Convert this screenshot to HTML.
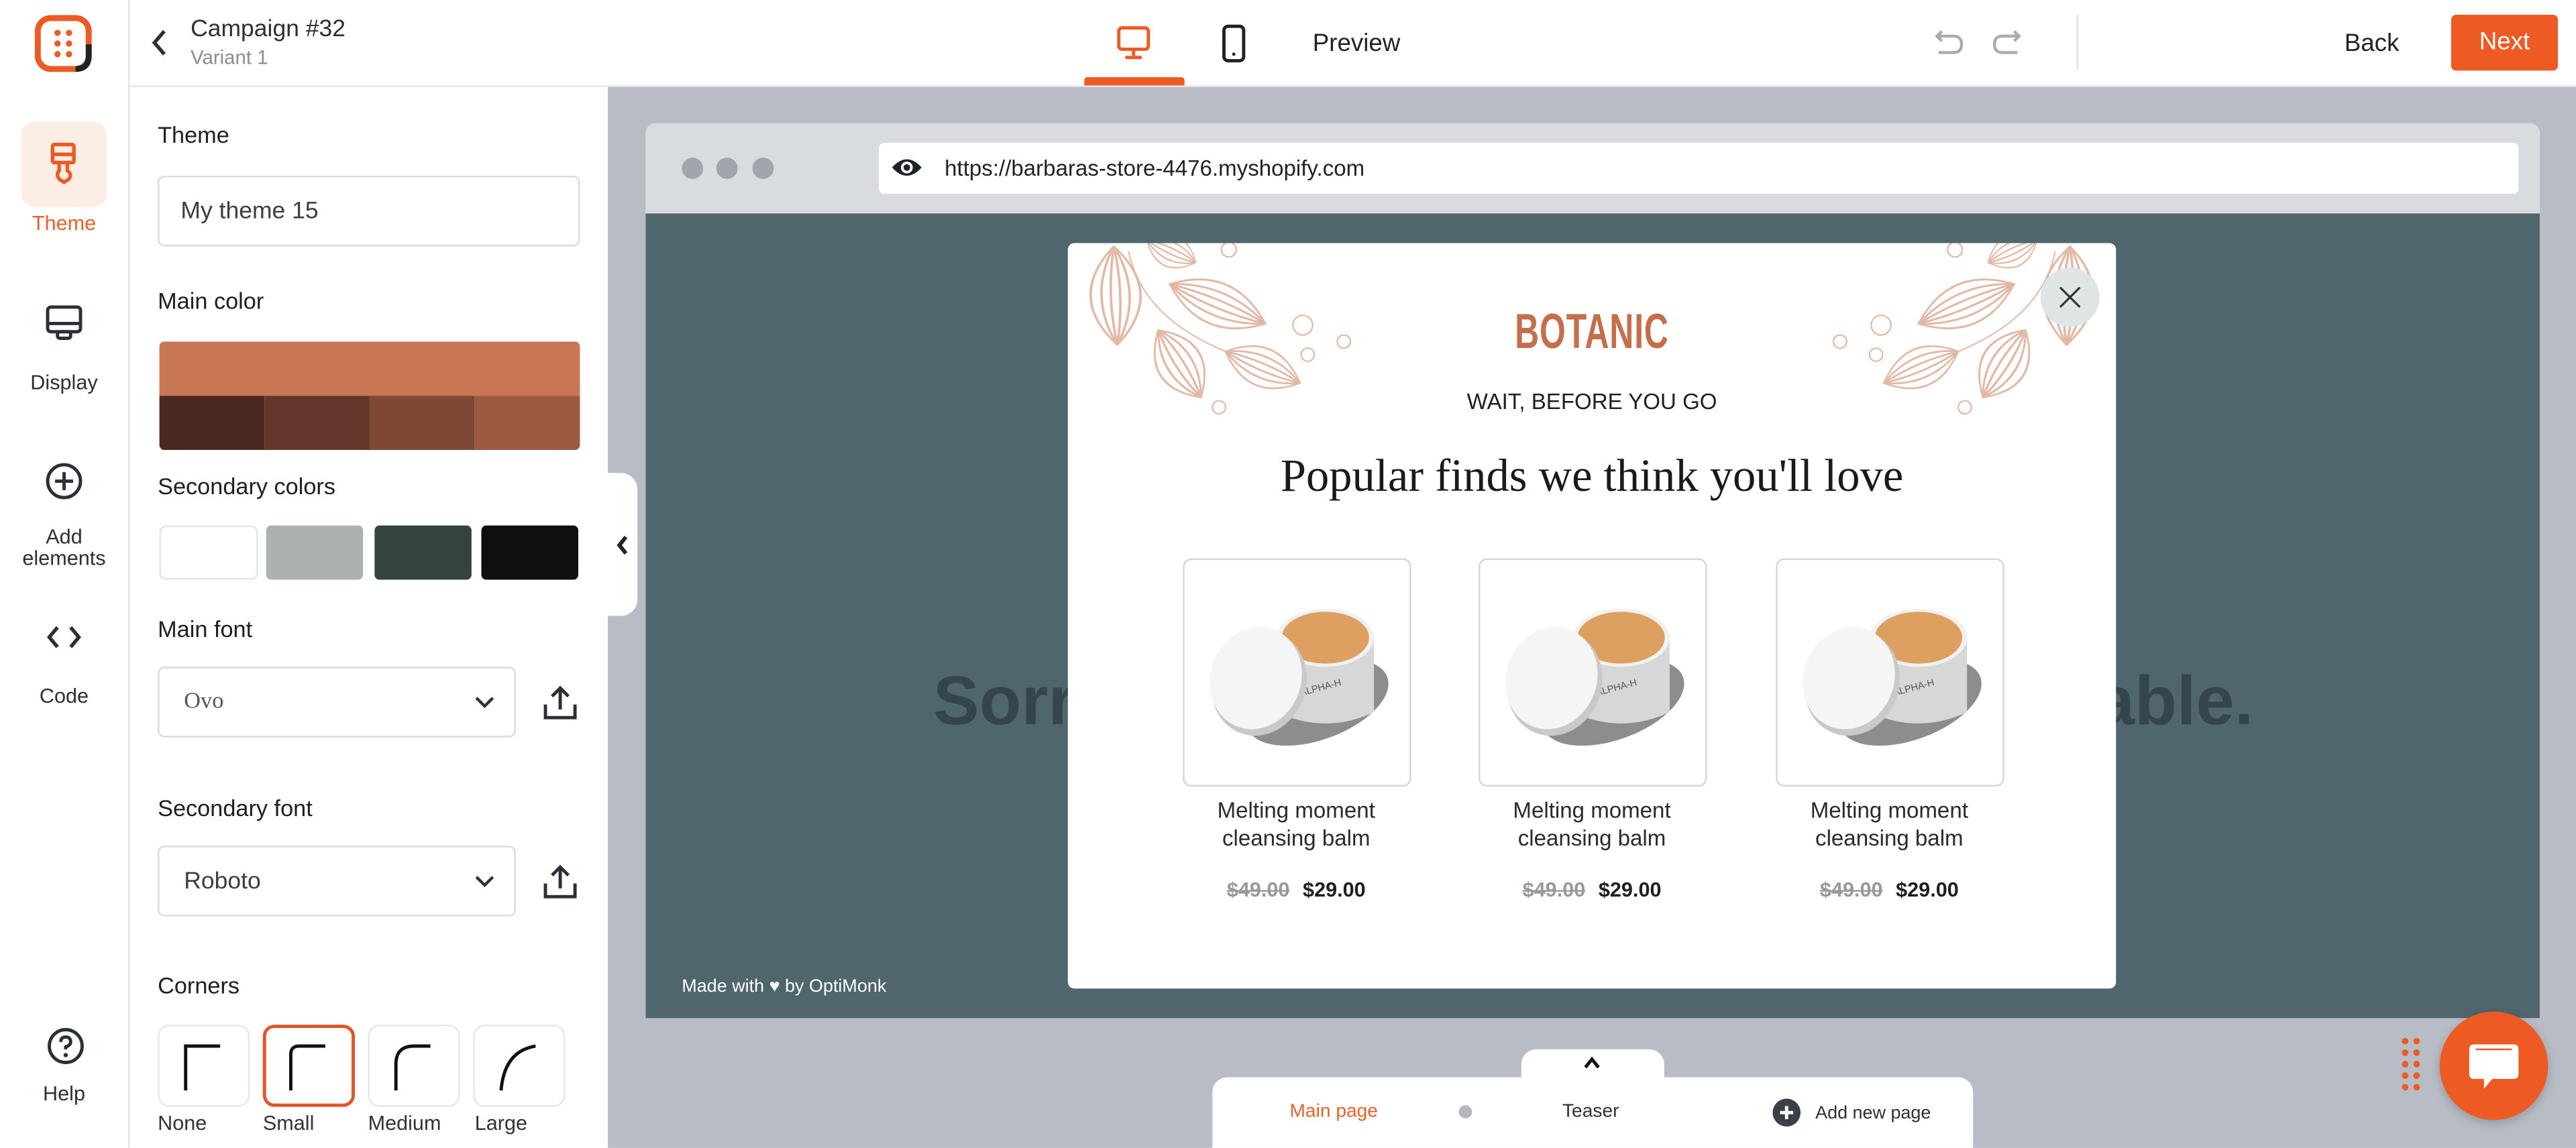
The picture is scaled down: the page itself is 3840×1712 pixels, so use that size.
<!DOCTYPE html>
<html><head><meta charset="utf-8">
<style>
html,body{margin:0;padding:0;width:3840px;height:1711px;overflow:hidden;background:#fff;}
#w{position:absolute;left:0;top:0;width:1568px;height:699px;transform:scale(2.44898);transform-origin:0 0;font-family:"Liberation Sans",sans-serif;color:#23262b;}
.a{position:absolute;}
.t{position:absolute;white-space:nowrap;}
.lbl{font-size:14px;font-weight:500;color:#1d1f23;}
.rail{font-size:12.5px;color:#2b2f36;text-align:center;width:78px;left:0;}
.box{position:absolute;border:1px solid #d9dbdf;border-radius:4px;background:#fff;box-sizing:border-box;}
.card{position:absolute;top:340px;width:139px;height:139px;border:1px solid #d6d6d6;border-radius:5px;box-sizing:border-box;background:#fff;}
.pname{position:absolute;top:486px;width:160px;text-align:center;font-size:13.5px;line-height:16.5px;color:#2a2a2a;}
.price{position:absolute;top:535px;width:160px;text-align:center;font-size:12.5px;font-weight:bold;color:#1f1f1f;}
.price s{color:#9a9a9a;margin-right:8px;}
</style></head><body><div id="w">

<div class="a" style="left:0;top:0;width:1568px;height:52px;background:#fff;border-bottom:1px solid #e3e5e8;"></div>
<div class="a" style="left:0;top:0;width:78px;height:699px;background:#fff;border-right:1px solid #e2e4e7;"></div>
<svg class="a" style="left:21px;top:9px" width="36" height="36" viewBox="0 0 36 36">
<rect x="2" y="2" width="31" height="31" rx="8" fill="none" stroke="#ee5a24" stroke-width="3.6"/>
<path d="M25 33 Q33 33 33 25 L33 18" fill="none" stroke="#222" stroke-width="3.6"/>
<g fill="#ee5a24"><circle cx="14" cy="11" r="1.9"/><circle cx="21" cy="11" r="1.9"/><circle cx="14" cy="17.5" r="1.9"/><circle cx="21" cy="17.5" r="1.9"/><circle cx="14" cy="24" r="1.9"/><circle cx="21" cy="24" r="1.9"/></g></svg>
<div class="a" style="left:13px;top:74px;width:52px;height:52px;border-radius:8px;background:#fdeee5;"></div>
<svg class="a" style="left:28px;top:86px" width="22" height="28" viewBox="0 0 22 28"><g fill="none" stroke="#ee5a24" stroke-width="2.2" stroke-linejoin="round"><rect x="4" y="2" width="13" height="11" rx="1"/><line x1="4" y1="8" x2="17" y2="8"/><path d="M8 13 L8 18 Q6 20 8 23 L11 25 L14 23 Q16 20 13 18 L13 13"/></g></svg>
<div class="t rail" style="top:129px;color:#e8622c;font-weight:500;">Theme</div>
<svg class="a" style="left:27px;top:185px" width="24" height="24" viewBox="0 0 24 24"><g fill="none" stroke="#2b2f36" stroke-width="2"><rect x="2" y="2" width="20" height="15" rx="2"/><line x1="2" y1="12" x2="22" y2="12"/><rect x="8" y="17" width="8" height="4" rx="1.5"/></g></svg>
<div class="t rail" style="top:226px;">Display</div>
<svg class="a" style="left:27px;top:281px" width="24" height="24" viewBox="0 0 24 24"><g fill="none" stroke="#2b2f36" stroke-width="2"><circle cx="12" cy="12" r="10"/><line x1="12" y1="6.5" x2="12" y2="17.5"/><line x1="6.5" y1="12" x2="17.5" y2="12"/></g></svg>
<div class="t rail" style="top:321px;line-height:13px;white-space:normal;">Add<br>elements</div>
<svg class="a" style="left:28px;top:380px" width="22" height="16" viewBox="0 0 22 16"><g fill="none" stroke="#2b2f36" stroke-width="2.2"><path d="M7 2 L2 8 L7 14"/><path d="M15 2 L20 8 L15 14"/></g></svg>
<div class="t rail" style="top:417px;">Code</div>
<svg class="a" style="left:28px;top:625px" width="24" height="24" viewBox="0 0 24 24"><g fill="none" stroke="#2b2f36" stroke-width="2"><circle cx="12" cy="12" r="10"/><path d="M9 9.5 Q9 6.5 12 6.5 Q15 6.5 15 9.5 Q15 11.5 12 12.5 L12 14"/></g><circle cx="12" cy="17.5" r="1.3" fill="#2b2f36"/></svg>
<div class="t rail" style="top:659px;">Help</div>

<svg class="a" style="left:91px;top:17px" width="12" height="18" viewBox="0 0 12 18"><path d="M9 2 L3 9 L9 16" fill="none" stroke="#2b2f36" stroke-width="2.2"/></svg>
<div class="t" style="left:116px;top:10px;font-size:14.5px;color:#2b2f36;font-weight:500;">Campaign #32</div>
<div class="t" style="left:116px;top:28px;font-size:12px;color:#8a8e95;">Variant 1</div>

<svg class="a" style="left:679px;top:15px" width="22" height="22" viewBox="0 0 22 22"><g fill="none" stroke="#ee5a24" stroke-width="2"><rect x="2" y="2" width="18" height="13" rx="2"/><line x1="11" y1="15" x2="11" y2="19"/><line x1="6" y1="20" x2="16" y2="20"/></g></svg>
<div class="a" style="left:660px;top:47px;width:61px;height:5px;background:#ee5a24;border-radius:2px 2px 0 0;"></div>
<svg class="a" style="left:743px;top:14px" width="16" height="26" viewBox="0 0 16 26"><rect x="2" y="2" width="12" height="21" rx="2.5" fill="none" stroke="#1f2227" stroke-width="2"/><circle cx="8" cy="19" r="1" fill="#1f2227"/></svg>
<div class="t" style="left:799px;top:18px;font-size:15px;color:#1f2227;font-weight:500;">Preview</div>
<svg class="a" style="left:1176px;top:16px" width="56" height="20" viewBox="0 0 56 20"><g fill="none" stroke="#a9adb3" stroke-width="1.8"><path d="M6 3 L3 6 L6 9"/><path d="M3 6 L13 6 Q18 6 18 11 Q18 16 13 16 L4 16"/><path d="M50 3 L53 6 L50 9"/><path d="M53 6 L43 6 Q38 6 38 11 Q38 16 43 16 L52 16"/></g></svg>
<div class="a" style="left:1264px;top:9px;width:1px;height:34px;background:#dfe1e4;"></div>
<div class="t" style="left:1427px;top:18px;font-size:15px;color:#1f2227;font-weight:500;">Back</div>
<div class="a" style="left:1492px;top:9px;width:65px;height:34px;background:#ee5a24;border-radius:3px;color:#fff;font-size:15px;font-weight:500;text-align:center;line-height:34px;">Next</div>

<div class="a" style="left:370px;top:53px;width:1198px;height:646px;background:#b8bdc5;"></div>

<div class="t lbl" style="left:96px;top:74px;">Theme</div>
<div class="box" style="left:96px;top:107px;width:257px;height:43px;"></div>
<div class="t" style="left:110px;top:121px;font-size:14.5px;color:#3a3d42;">My theme 15</div>
<div class="t lbl" style="left:96px;top:175px;">Main color</div>
<div class="a" style="left:97px;top:208px;width:256px;height:66px;border-radius:3px;overflow:hidden;">
<div class="a" style="left:0;top:0;width:256px;height:33px;background:#c87654;"></div>
<div class="a" style="left:0;top:33px;width:64px;height:33px;background:#4a2920;"></div>
<div class="a" style="left:64px;top:33px;width:64px;height:33px;background:#64372a;"></div>
<div class="a" style="left:128px;top:33px;width:64px;height:33px;background:#7f4834;"></div>
<div class="a" style="left:192px;top:33px;width:64px;height:33px;background:#9b5a3f;"></div>
</div>
<div class="t lbl" style="left:96px;top:288px;">Secondary colors</div>
<div class="box" style="left:97px;top:320px;width:60px;height:33px;border-color:#e4e5e7;"></div>
<div class="a" style="left:162px;top:320px;width:59px;height:33px;border-radius:3px;background:#adb1af;"></div>
<div class="a" style="left:228px;top:320px;width:59px;height:33px;border-radius:3px;background:#33443f;"></div>
<div class="a" style="left:293px;top:320px;width:59px;height:33px;border-radius:3px;background:#0d100f;"></div>
<div class="a" style="left:362px;top:288px;width:26px;height:87px;background:#fff;border-radius:0 10px 10px 0;"></div>
<svg class="a" style="left:374px;top:325px" width="10" height="14" viewBox="0 0 10 14"><path d="M7 2 L3 7 L7 12" fill="none" stroke="#1f2227" stroke-width="2.4"/></svg>

<div class="t lbl" style="left:96px;top:375px;">Main font</div>
<div class="box" style="left:96px;top:406px;width:218px;height:43px;"></div>
<div class="t" style="left:112px;top:420px;font-size:14px;color:#555;font-family:'Liberation Serif',serif;">Ovo</div>
<svg class="a" style="left:288px;top:423px" width="14" height="9" viewBox="0 0 14 9"><path d="M2 2 L7 7 L12 2" fill="none" stroke="#333" stroke-width="1.8"/></svg>
<svg class="a" style="left:329px;top:416px" width="24" height="24" viewBox="0 0 24 24"><g fill="none" stroke="#2b2f36" stroke-width="2"><path d="M3 13 L3 21 L21 21 L21 13"/><path d="M12 16 L12 3"/><path d="M7 8 L12 3 L17 8"/></g></svg>
<div class="t lbl" style="left:96px;top:484px;">Secondary font</div>
<div class="box" style="left:96px;top:515px;width:218px;height:43px;"></div>
<div class="t" style="left:112px;top:529px;font-size:14.5px;color:#3a3d42;">Roboto</div>
<svg class="a" style="left:288px;top:532px" width="14" height="9" viewBox="0 0 14 9"><path d="M2 2 L7 7 L12 2" fill="none" stroke="#333" stroke-width="1.8"/></svg>
<svg class="a" style="left:329px;top:525px" width="24" height="24" viewBox="0 0 24 24"><g fill="none" stroke="#2b2f36" stroke-width="2"><path d="M3 13 L3 21 L21 21 L21 13"/><path d="M12 16 L12 3"/><path d="M7 8 L12 3 L17 8"/></g></svg>
<div class="t lbl" style="left:96px;top:592px;">Corners</div>
<div class="box" style="left:96px;top:624px;width:56px;height:50px;border-color:#e6e7e9;border-radius:7px;"></div>
<div class="box" style="left:160px;top:624px;width:56px;height:50px;border:2px solid #e0552a;border-radius:7px;"></div>
<div class="box" style="left:224px;top:624px;width:56px;height:50px;border-color:#e6e7e9;border-radius:7px;"></div>
<div class="box" style="left:288px;top:624px;width:56px;height:50px;border-color:#e6e7e9;border-radius:7px;"></div>
<svg class="a" style="left:96px;top:624px" width="250" height="50" viewBox="0 0 250 50"><g fill="none" stroke="#111" stroke-width="2"><path d="M17 40 L17 13 L38 13"/><path d="M81 40 L81 18 Q81 13 86 13 L102 13"/><path d="M145 40 L145 24 Q145 13 156 13 L166 13"/><path d="M209 40 Q211 16 230 13"/></g></svg>
<div class="t" style="left:96px;top:677px;font-size:12.5px;color:#333;">None</div>
<div class="t" style="left:160px;top:677px;font-size:12.5px;color:#333;">Small</div>
<div class="t" style="left:224px;top:677px;font-size:12.5px;color:#333;">Medium</div>
<div class="t" style="left:289px;top:677px;font-size:12.5px;color:#333;">Large</div>

<div class="a" style="left:393px;top:75px;width:1153px;height:545px;background:#d8dbe0;border-radius:6px 6px 0 0;overflow:hidden;">
<div class="a" style="left:0;top:55px;width:1153px;height:490px;background:#4f666c;"></div>
</div>
<div class="a" style="left:415px;top:96px;width:13px;height:13px;border-radius:50%;background:#a2a6ac;"></div>
<div class="a" style="left:436px;top:96px;width:13px;height:13px;border-radius:50%;background:#a2a6ac;"></div>
<div class="a" style="left:458px;top:96px;width:13px;height:13px;border-radius:50%;background:#a2a6ac;"></div>
<div class="a" style="left:535px;top:87px;width:998px;height:31px;background:#fff;border-radius:3px;"></div>
<svg class="a" style="left:542px;top:94px" width="20" height="16" viewBox="0 0 20 16"><path d="M1 8 Q10 -2 19 8 Q10 18 1 8Z" fill="#1f2227"/><circle cx="10" cy="8" r="3.6" fill="#fff"/><circle cx="10" cy="8" r="2" fill="#1f2227"/></svg>
<div class="t" style="left:575px;top:95px;font-size:13.5px;color:#1f2227;">https://barbaras-store-4476.myshopify.com</div>
<div class="t" style="left:568px;top:403px;font-size:42px;font-weight:bold;color:#34464b;">Sorr</div>
<div class="t" style="left:1276px;top:403px;font-size:42px;font-weight:bold;color:#34464b;">able.</div>
<div class="t" style="left:415px;top:595px;font-size:11px;color:#fff;">Made with ♥ by OptiMonk</div>

<div class="a" style="left:650px;top:148px;width:638px;height:454px;background:#fff;border-radius:4px;overflow:hidden;">
<svg class="a" style="left:0;top:0" width="638" height="140" viewBox="0 0 638 140">
<defs><g id="lf" fill="none" stroke="#e2b9a6" stroke-width="0.8"><path d="M0 0 Q30 -16 60 0 Q30 16 0 0Z"/><path d="M0 0 Q30 -9 60 0"/><path d="M0 0 Q30 -3 60 0"/><path d="M0 0 Q30 3 60 0"/><path d="M0 0 Q30 9 60 0"/></g></defs>
<g id="deco">
<use href="#lf" transform="translate(28,2) rotate(88) scale(1,1.9)"/>
<use href="#lf" transform="translate(62,25) rotate(22.5) scale(1.05,1.6)"/>
<use href="#lf" transform="translate(55,53) rotate(57.6) scale(0.81,1.7)"/>
<use href="#lf" transform="translate(96,66) rotate(23) scale(0.82,1.45)"/>
<use href="#lf" transform="translate(48,-2) rotate(25) scale(0.55,1.2)"/>
<path d="M37 5 Q45 45 96 66" fill="none" stroke="#e2b9a6" stroke-width="0.8"/>
<g fill="none" stroke="#e2b9a6" stroke-width="0.9"><circle cx="98" cy="4" r="4.5"/><circle cx="143" cy="50" r="6"/><circle cx="168" cy="60" r="4"/><circle cx="146" cy="68" r="4"/><circle cx="92" cy="100" r="4"/></g>
</g>
<use href="#deco" transform="translate(638,0) scale(-1,1)"/>
</svg>
<div class="a" style="left:592px;top:15px;width:36px;height:36px;border-radius:50%;background:#dfe5e4;"></div>
<svg class="a" style="left:602px;top:25px" width="16" height="16" viewBox="0 0 16 16"><path d="M2 2 L14 14 M14 2 L2 14" stroke="#333" stroke-width="1.3"/></svg>
<div class="t" style="left:0;width:638px;top:38px;text-align:center;"><span style="display:inline-block;font-size:30px;font-weight:bold;color:#c46e4c;transform:scaleX(0.68);letter-spacing:0.5px;">BOTANIC</span></div>
<div class="t" style="left:0;width:638px;top:89px;text-align:center;font-size:13.5px;color:#1f1f1f;">WAIT, BEFORE YOU GO</div>
<div class="t" style="left:0;width:638px;top:127px;text-align:center;font-size:28px;color:#1a1a1a;font-family:'Liberation Serif',serif;">Popular finds we think you'll love</div>
</div>
<svg width="0" height="0" style="position:absolute"><defs><g id="jar">
<ellipse cx="82" cy="88" rx="46" ry="23" transform="rotate(-20 82 88)" fill="#8d8d8d"/>
<path d="M57 48 L57 94 Q87 108 117 94 L117 48Z" fill="#d7d7d7"/>
<ellipse cx="87" cy="48" rx="30" ry="18" fill="#f1f1f1"/>
<ellipse cx="87" cy="48" rx="27" ry="16" fill="#dea060"/>
<text x="72" y="84" font-size="6" fill="#555" font-family="Liberation Sans,sans-serif" transform="rotate(-15 72 84)">ALPHA-H</text>
<ellipse cx="46" cy="76" rx="29" ry="33" transform="rotate(20 46 76)" fill="#c9c9c9"/>
<ellipse cx="44" cy="73" rx="28" ry="32" transform="rotate(20 44 73)" fill="#f5f5f5"/>
</g></defs></svg>
<div class="card" style="left:720px;"><svg width="137" height="137" viewBox="0 0 139 139"><use href="#jar"/></svg></div>
<div class="card" style="left:900px;"><svg width="137" height="137" viewBox="0 0 139 139"><use href="#jar"/></svg></div>
<div class="card" style="left:1081px;"><svg width="137" height="137" viewBox="0 0 139 139"><use href="#jar"/></svg></div>
<div class="pname" style="left:709px;">Melting moment<br>cleansing balm</div>
<div class="pname" style="left:889px;">Melting moment<br>cleansing balm</div>
<div class="pname" style="left:1070px;">Melting moment<br>cleansing balm</div>
<div class="price" style="left:709px;"><s>$49.00</s>$29.00</div>
<div class="price" style="left:889px;"><s>$49.00</s>$29.00</div>
<div class="price" style="left:1070px;"><s>$49.00</s>$29.00</div>

<div class="a" style="left:926px;top:639px;width:87px;height:30px;background:#fff;border-radius:9px 9px 0 0;"></div>
<svg class="a" style="left:962px;top:642px" width="14" height="10" viewBox="0 0 14 10"><path d="M3 8 L7 3 L11 8" fill="none" stroke="#111" stroke-width="2"/></svg>
<div class="a" style="left:738px;top:656px;width:463px;height:43px;background:#fff;border-radius:9px 9px 0 0;"></div>
<div class="t" style="left:785px;top:671px;font-size:11.5px;color:#e8622c;font-weight:500;">Main page</div>
<div class="a" style="left:888px;top:673px;width:8px;height:8px;border-radius:50%;background:#b4b8be;"></div>
<div class="t" style="left:951px;top:671px;font-size:11.5px;color:#2b2f36;font-weight:500;">Teaser</div>
<svg class="a" style="left:1079px;top:669px" width="17" height="17" viewBox="0 0 17 17"><circle cx="8.5" cy="8.5" r="8.5" fill="#3b4048"/><path d="M8.5 4.5 V12.5 M4.5 8.5 H12.5" stroke="#fff" stroke-width="2"/></svg>
<div class="t" style="left:1105px;top:672px;font-size:11px;color:#2b2f36;font-weight:500;">Add new page</div>

<svg class="a" style="left:1461px;top:631px" width="14" height="36" viewBox="0 0 14 36"><g fill="#ee5a24"><rect x="1" y="1" width="4" height="4" rx="2"/><rect x="8" y="1" width="4" height="4" rx="2"/><rect x="1" y="8" width="4" height="4" rx="2"/><rect x="8" y="8" width="4" height="4" rx="2"/><rect x="1" y="15" width="4" height="4" rx="2"/><rect x="8" y="15" width="4" height="4" rx="2"/><rect x="1" y="22" width="4" height="4" rx="2"/><rect x="8" y="22" width="4" height="4" rx="2"/><rect x="1" y="29" width="4" height="4" rx="2"/><rect x="8" y="29" width="4" height="4" rx="2"/></g></svg>
<div class="a" style="left:1485px;top:616px;width:66px;height:66px;border-radius:50%;background:#ee5a24;box-shadow:0 2px 6px rgba(0,0,0,0.2);"></div>
<svg class="a" style="left:1500px;top:632px" width="36" height="36" viewBox="0 0 36 36"><path d="M6 4 H30 Q33 4 33 7 V22 Q33 25 30 25 H17 L12 31 L12 25 H6 Q3 25 3 22 V7 Q3 4 6 4Z" fill="#fff"/><path d="M7 7 H29" stroke="#ee5a24" stroke-width="1"/></svg>

</div></body></html>
